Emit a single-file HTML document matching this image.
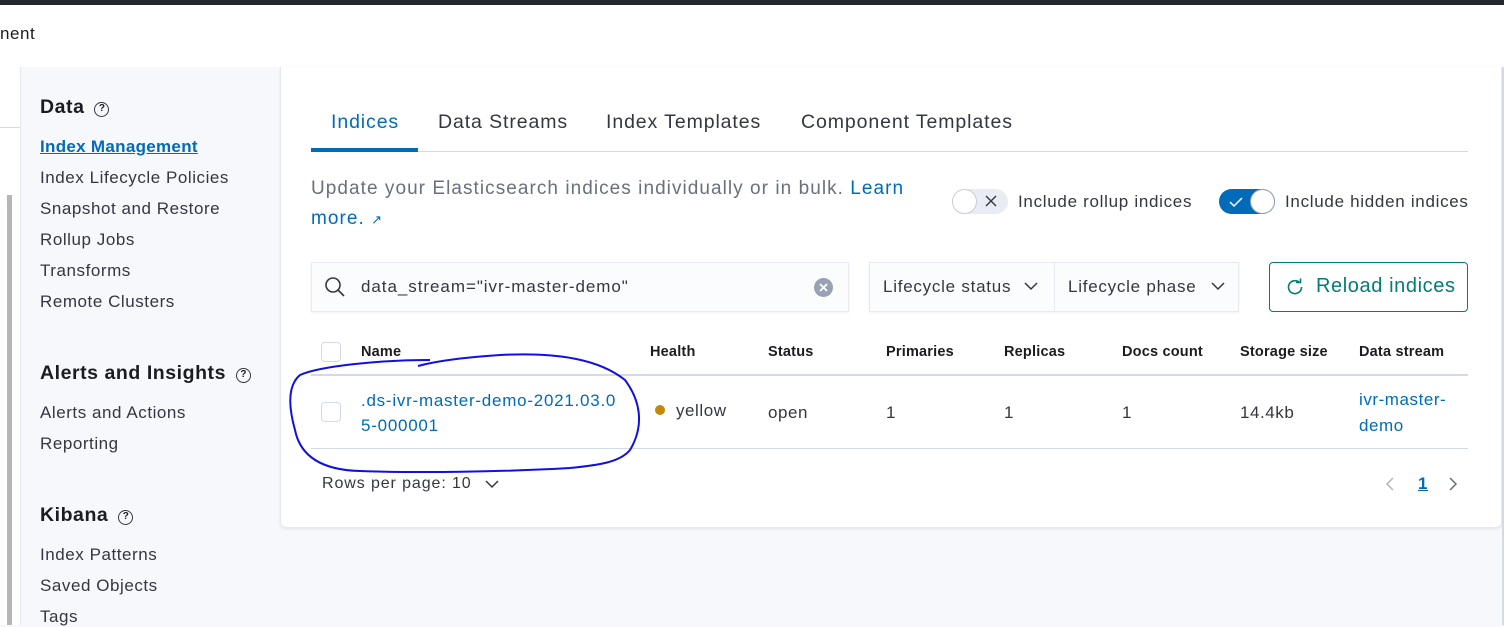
<!DOCTYPE html>
<html><head><style>
*{margin:0;padding:0;box-sizing:border-box}
body{width:1504px;height:625px;overflow:hidden;background:#f7f8fc;font-family:"Liberation Sans",sans-serif;color:#343741;position:relative;letter-spacing:0.55px}
.a{position:absolute;white-space:nowrap}
.nav{font-size:17px;color:#343741}
.h{font-size:19.5px;font-weight:bold;color:#1a1c21}
.q{display:inline-block;width:15px;height:15px;border:1.5px solid #343741;border-radius:50%;font-size:10px;text-align:center;line-height:12px;font-weight:bold;vertical-align:2px;margin-left:10px;letter-spacing:0}
.th{font-size:14.5px;font-weight:bold;color:#1a1c21;top:344px;letter-spacing:0.2px}
.td{font-size:17px;top:401px}
.cb{width:20px;height:20px;border:1px solid #d3dae6;border-radius:4px;background:#fff}
.tab{font-size:19.5px;top:111px;letter-spacing:0.9px}
</style></head><body>
<div class="a" style="left:0;top:0;width:1504px;height:5px;background:#25282f"></div>
<div class="a" style="left:0;top:5px;width:1504px;height:62px;background:#fff;box-shadow:0 1px 3px rgba(0,0,0,.12)"></div>
<div class="a" style="left:0;top:24px;font-size:17px;color:#1a1c21">nent</div>
<div class="a" style="left:0;top:67px;width:20px;height:558px;background:#fff"></div>
<div class="a" style="left:0;top:127px;width:20px;height:1px;background:#d3dae6"></div>
<div class="a" style="left:7px;top:195px;width:5px;height:430px;background:#b4b6bc"></div>
<div class="a" style="left:20px;top:67px;width:260px;height:558px;background:#f7f8fc;border-left:1px solid #e6e9f0"></div>
<div class="a h" style="left:40px;top:96px">Data<span class="q">?</span></div>
<div class="a nav" style="left:40px;top:137px;color:#006bb8;font-weight:bold;text-decoration:underline;letter-spacing:0.3px">Index Management</div>
<div class="a nav" style="left:40px;top:168px">Index Lifecycle Policies</div>
<div class="a nav" style="left:40px;top:199px">Snapshot and Restore</div>
<div class="a nav" style="left:40px;top:230px">Rollup Jobs</div>
<div class="a nav" style="left:40px;top:261px">Transforms</div>
<div class="a nav" style="left:40px;top:292px">Remote Clusters</div>
<div class="a h" style="left:40px;top:362px">Alerts and Insights<span class="q">?</span></div>
<div class="a nav" style="left:40px;top:403px">Alerts and Actions</div>
<div class="a nav" style="left:40px;top:434px">Reporting</div>
<div class="a h" style="left:40px;top:504px">Kibana<span class="q">?</span></div>
<div class="a nav" style="left:40px;top:545px">Index Patterns</div>
<div class="a nav" style="left:40px;top:576px">Saved Objects</div>
<div class="a nav" style="left:40px;top:607px">Tags</div>
<div class="a" style="left:280px;top:67px;width:1222px;height:461px;background:#fff;border:1px solid #e6e9f0;border-top:none;border-radius:0 0 6px 6px;box-shadow:0 1px 3px rgba(0,0,0,.08)"></div>
<div class="a" style="left:1502px;top:67px;width:2px;height:558px;background:#d3dae6"></div>
<div class="a" style="left:311px;top:151px;width:1157px;height:1px;background:#d3dae6"></div>
<div class="a" style="left:311px;top:148px;width:107px;height:4px;background:#006bb8"></div>
<div class="a tab" style="left:331px;color:#006bb8">Indices</div>
<div class="a tab" style="left:438px">Data Streams</div>
<div class="a tab" style="left:606px">Index Templates</div>
<div class="a tab" style="left:801px">Component Templates</div>
<div class="a" style="left:311px;top:174px;font-size:19px;color:#69707d;line-height:30px;white-space:normal;width:620px;letter-spacing:1.05px">Update your Elasticsearch indices individually or in bulk. <span style="color:#006bb8">Learn<br>more. <span style="font-size:13px">↗</span></span></div>
<div class="a" style="left:952px;top:189px;width:56px;height:25px;border-radius:13px;background:#e9edf3"></div>
<div class="a" style="left:952px;top:189px;width:25px;height:25px;border-radius:50%;background:#fff;border:1px solid #c9ced6"></div>
<svg class="a" style="left:984px;top:194px" width="14" height="14"><path d="M2 2l10 10M12 2L2 12" stroke="#343741" stroke-width="1.4"/></svg>
<div class="a" style="left:1018px;top:192px;font-size:17px;letter-spacing:0.7px">Include rollup indices</div>
<div class="a" style="left:1219px;top:189px;width:56px;height:25px;border-radius:13px;background:#006bb8"></div>
<div class="a" style="left:1250px;top:189px;width:25px;height:25px;border-radius:50%;background:#fff;border:1px solid #98a2b3"></div>
<svg class="a" style="left:1228px;top:195px" width="16" height="14"><path d="M2 7l4 4 8-8" fill="none" stroke="#fff" stroke-width="1.5"/></svg>
<div class="a" style="left:1285px;top:192px;font-size:17px;letter-spacing:0.7px">Include hidden indices</div>
<div class="a" style="left:311px;top:262px;width:538px;height:50px;background:#fbfcfd;border:1px solid #e6e9f0;box-shadow:0 1px 2px rgba(0,0,0,.06)"></div>
<svg class="a" style="left:324px;top:276px" width="22" height="22" viewBox="0 0 22 22"><circle cx="9" cy="9" r="7" fill="none" stroke="#343741" stroke-width="1.6"/><path d="M14 14l6 6" stroke="#343741" stroke-width="1.6"/></svg>
<div class="a" style="left:361px;top:277px;font-size:17px;color:#343741;letter-spacing:0.95px">data_stream="ivr-master-demo"</div>
<div class="a" style="left:814px;top:278px;width:19px;height:19px;border-radius:50%;background:#98a2b3"></div>
<svg class="a" style="left:814px;top:278px" width="19" height="19"><path d="M6 6l7 7M13 6l-7 7" stroke="#fff" stroke-width="1.8"/></svg>
<div class="a" style="left:869px;top:262px;width:370px;height:50px;background:#fbfcfd;border:1px solid #e6e9f0;box-shadow:0 1px 2px rgba(0,0,0,.06)"></div>
<div class="a" style="left:1054px;top:263px;width:1px;height:48px;background:#e6e9f0"></div>
<div class="a" style="left:883px;top:277px;font-size:17px;letter-spacing:0.75px">Lifecycle status</div>
<div class="a" style="left:1068px;top:277px;font-size:17px;letter-spacing:0.75px">Lifecycle phase</div>
<svg class="a" style="left:1023px;top:280px" width="16" height="12"><path d="M2 3l6 6 6-6" fill="none" stroke="#343741" stroke-width="1.5"/></svg>
<svg class="a" style="left:1210px;top:280px" width="16" height="12"><path d="M2 3l6 6 6-6" fill="none" stroke="#343741" stroke-width="1.5"/></svg>
<div class="a" style="left:1269px;top:262px;width:199px;height:50px;border:1px solid #017d73;border-radius:4px;background:#fff"></div>
<svg class="a" style="left:1286px;top:278px" width="18" height="18" viewBox="0 0 18 18"><path d="M14 5A6.5 6.5 0 1 0 15.5 9" fill="none" stroke="#017d73" stroke-width="1.6"/><path d="M10 4.5h4.5V0.5" fill="none" stroke="#017d73" stroke-width="1.6"/></svg>
<div class="a" style="left:1316px;top:275px;font-size:20px;color:#017d73;letter-spacing:0.6px">Reload indices</div>
<div class="a cb" style="left:321px;top:342px"></div>
<div class="a th" style="left:361px">Name</div>
<div class="a th" style="left:650px">Health</div>
<div class="a th" style="left:768px">Status</div>
<div class="a th" style="left:886px">Primaries</div>
<div class="a th" style="left:1004px">Replicas</div>
<div class="a th" style="left:1122px">Docs count</div>
<div class="a th" style="left:1240px">Storage size</div>
<div class="a th" style="left:1359px">Data stream</div>
<div class="a" style="left:311px;top:374px;width:1157px;height:2px;background:#d3dae6"></div>
<div class="a" style="left:311px;top:448px;width:1157px;height:1px;background:#d3dae6"></div>
<div class="a cb" style="left:321px;top:402px"></div>
<div class="a" style="left:361px;top:388px;font-size:17px;color:#006bb8;line-height:25px;letter-spacing:0.75px">.ds-ivr-master-demo-2021.03.0<br>5-000001</div>
<div class="a" style="left:655px;top:405px;width:10px;height:10px;border-radius:50%;background:#c18a00"></div>
<div class="a td" style="left:676px">yellow</div>
<div class="a td" style="left:768px;top:403px">open</div>
<div class="a td" style="left:886px;top:403px">1</div>
<div class="a td" style="left:1004px;top:403px">1</div>
<div class="a td" style="left:1122px;top:403px">1</div>
<div class="a td" style="left:1240px;top:403px">14.4kb</div>
<div class="a" style="left:1359px;top:387px;font-size:17px;color:#006bb8;line-height:26px">ivr-master-<br>demo</div>
<div class="a" style="left:322px;top:475px;font-size:16px;letter-spacing:0.9px">Rows per page: 10</div>
<svg class="a" style="left:484px;top:478px" width="16" height="12"><path d="M2 3l6 6 6-6" fill="none" stroke="#343741" stroke-width="1.5"/></svg>
<svg class="a" style="left:1384px;top:475px" width="12" height="18"><path d="M9 3L3 9l6 6" fill="none" stroke="#b0b5be" stroke-width="1.5"/></svg>
<div class="a" style="left:1418px;top:474px;font-size:17px;font-weight:bold;color:#006bb8;text-decoration:underline">1</div>
<svg class="a" style="left:1447px;top:475px" width="12" height="18"><path d="M3 3l6 6-6 6" fill="none" stroke="#69707d" stroke-width="1.5"/></svg>
<svg class="a" style="left:0;top:0" width="1504" height="625"><path d="M418 366C440 360 470 357 500 355C560 352 600 360 625 380C640 400 645 425 630 450C620 462 600 465 570 468C500 472 420 473 360 471C320 470 300 455 295 430C288 405 288 385 300 375C320 366 380 360 430 360" fill="none" stroke="#1010e0" stroke-width="2"/></svg>
</body></html>
